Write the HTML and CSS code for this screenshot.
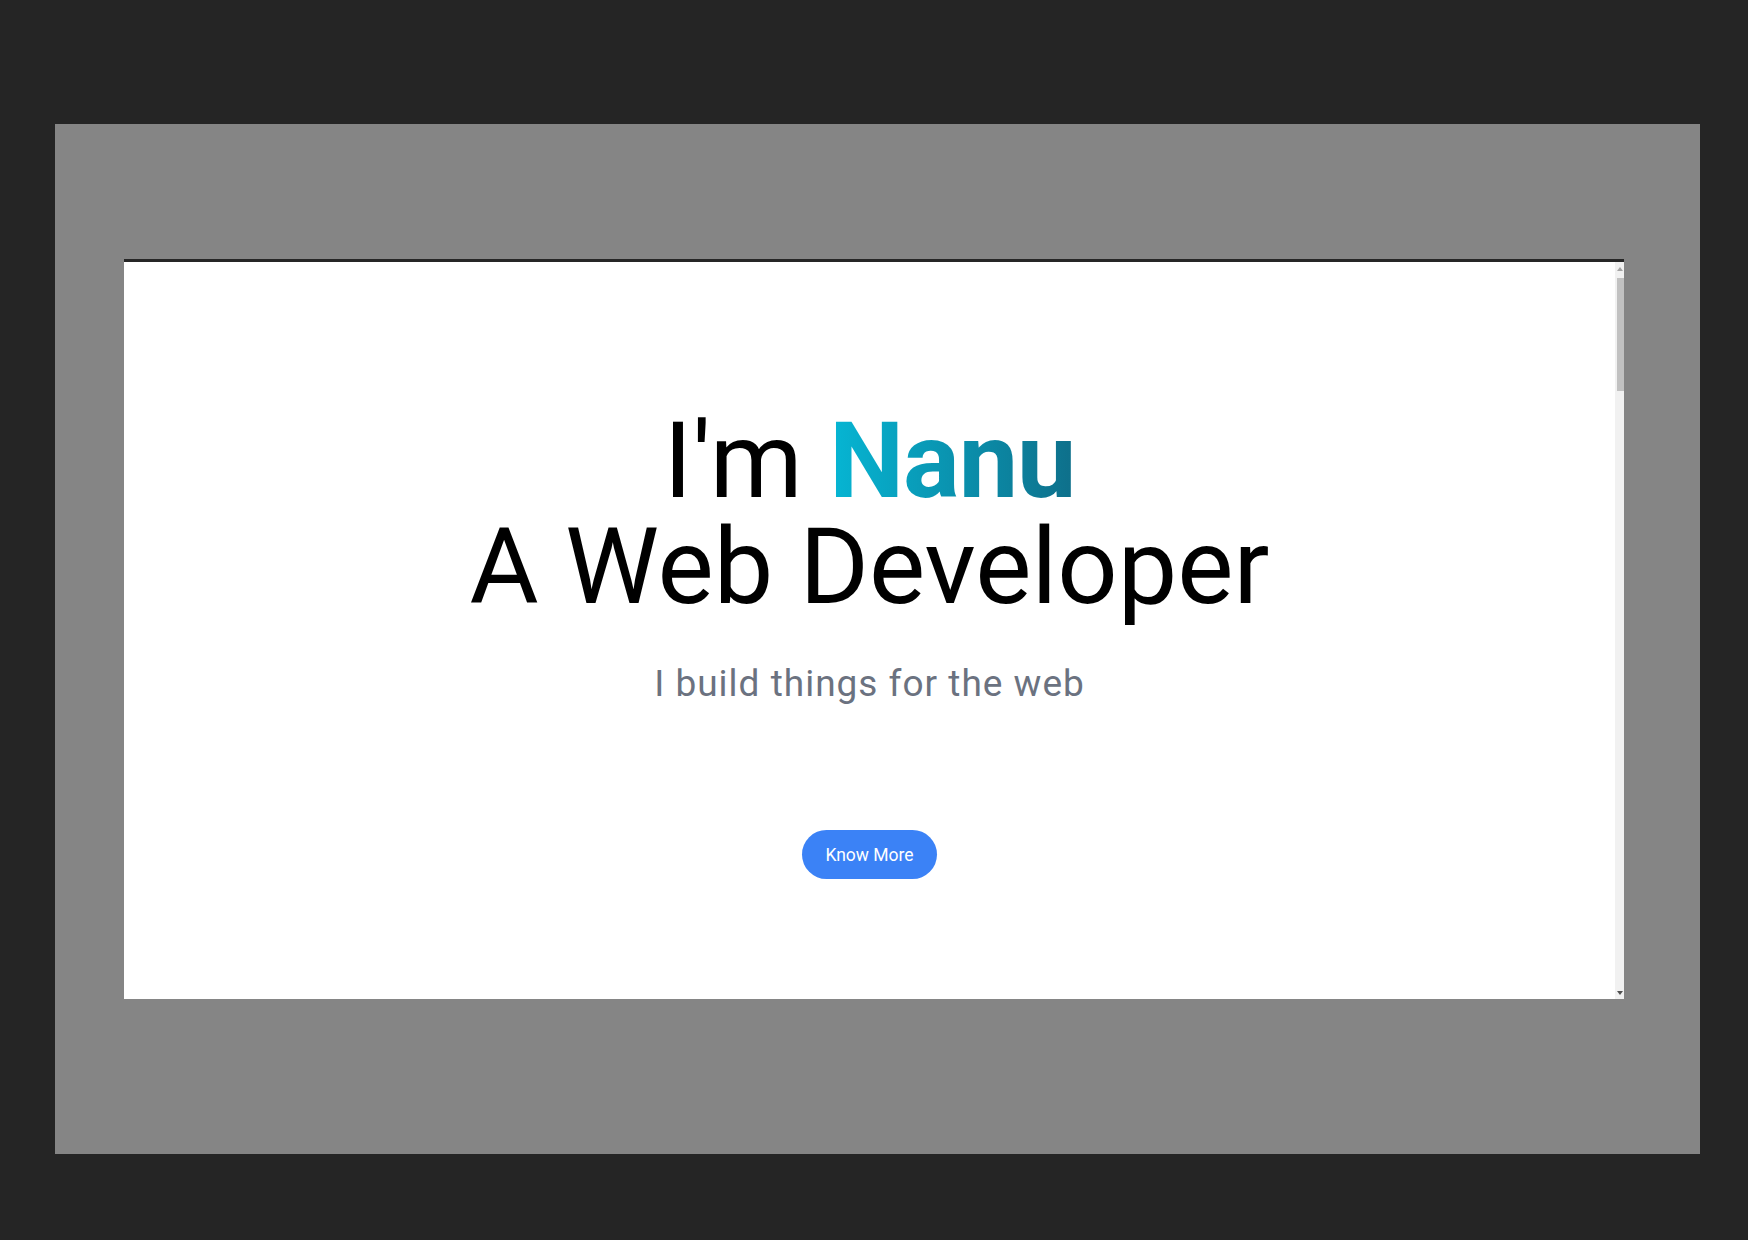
FILE: index.html
```html
<!DOCTYPE html>
<html lang="en">
<head>
<meta charset="utf-8">
<title>I'm Nanu</title>
<link rel="stylesheet" href="styles.css">
</head>
<body>
  <div class="stage">
    <div class="frame">
      <main class="hero">
        <h1 class="headline">
          <span class="line">I'm <span class="name">Nanu</span></span>
          <span class="line">A Web Developer</span>
        </h1>
        <p class="tagline">I build things for the web</p>
        <a class="cta" href="#">Know More</a>
      </main>
      <div class="scrollbar">
        <span class="arrow arrow-up"></span>
        <span class="thumb"></span>
        <span class="spacer"></span>
        <span class="arrow arrow-down"></span>
      </div>
    </div>
  </div>
</body>
</html>
```

FILE: styles.css
```css
* { box-sizing: border-box; }

html, body {
  margin: 0;
  height: 100%;
}

body {
  background: #252525;
  padding: 124px 48px 86px 55px;
  font-family: Roboto, "Liberation Sans", Arial, sans-serif;
}

.stage {
  width: 1645px;
  height: 1030px;
  background: #858585;
  padding: 135px 76px 155px 69px;
}

.frame {
  width: 1500px;
  height: 740px;
  background: #ffffff;
  border-top: 3px solid #262626;
  display: flex;
}

.hero {
  flex: 1;
  display: flex;
  flex-direction: column;
  align-items: center;
  padding-top: 146px;
}

.headline {
  margin: 0;
  font-size: 106px;
  line-height: 106px;
  font-weight: 400;
  color: #000000;
  text-align: center;
  display: flex;
  flex-direction: column;
  align-items: center;
}

.line { display: block; white-space: nowrap; }

.name {
  font-weight: 700;
  letter-spacing: -1px;
  background: linear-gradient(to right, #06b6d4, #0e6f8a);
  -webkit-background-clip: text;
  background-clip: text;
  color: transparent;
}

.tagline {
  margin: 44px 0 0;
  font-size: 37px;
  line-height: 40px;
  letter-spacing: 1px;
  color: #6b7280;
}

.cta {
  margin-top: 126px;
  height: 49px;
  padding: 0 23px;
  display: inline-flex;
  align-items: center;
  justify-content: center;
  background: #3b82f6;
  color: #ffffff;
  border-radius: 25px;
  font-size: 17.5px;
  text-decoration: none;
}

.scrollbar {
  width: 9px;
  background: #f1f1f1;
  display: flex;
  flex-direction: column;
  align-items: flex-end;
  padding: 5px 0 4px;
}

.arrow {
  width: 0;
  height: 0;
  border-left: 3px solid transparent;
  border-right: 3px solid transparent;
  margin-right: 1px;
}

.arrow-up { border-bottom: 4px solid #a3a3a3; }
.arrow-down { border-top: 4px solid #505050; }

.thumb {
  width: 7px;
  height: 113px;
  margin-top: 7px;
  background: #c1c1c1;
}

.spacer { flex: 1; }
```
